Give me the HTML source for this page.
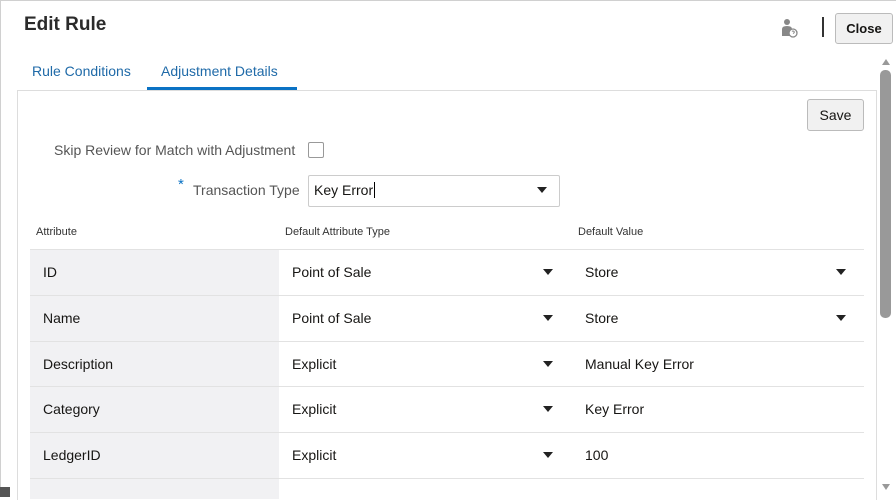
<!DOCTYPE html>
<html><head><style>
*{margin:0;padding:0;box-sizing:border-box}
body{width:896px;height:497px;overflow:hidden;background:#fff;font-family:"Liberation Sans",sans-serif;color:#161513;position:relative}
.abs{position:absolute}
.t{font-size:14px;color:#161513}
</style></head><body>
<div class="abs" style="left:0;top:0;width:896px;height:1px;background:#d0d0d0"></div>
<div class="abs" style="left:0;top:0;width:1px;height:497px;background:#d0d0d0"></div>
<div class="abs" style="left:24px;top:14px;font-size:19px;font-weight:bold;color:#2b2b2b">Edit Rule</div>
<svg class="abs" style="left:781px;top:18px" width="18" height="20" viewBox="0 0 18 20"><circle cx="6" cy="4" r="3" fill="#888"/><path d="M1 18V11q0-3 5-3t5 3v7z" fill="#888"/><circle cx="12" cy="15" r="4" fill="#fff" stroke="#888" stroke-width="1.3"/><path d="M11 13.5q1-1 2 0t-1 2" stroke="#888" fill="none"/></svg>
<div class="abs" style="left:822px;top:17px;width:2px;height:20px;background:#333"></div>
<div class="abs" style="left:835px;top:13px;width:58px;height:31px;background:#f1f1f1;border:1px solid #bbb;border-radius:3px;font-size:13px;font-weight:bold;text-align:center;line-height:29px">Close</div>
<div class="abs" style="left:32px;top:63px;font-size:14px;color:#1f6aa8">Rule Conditions</div>
<div class="abs" style="left:161px;top:63px;font-size:14px;color:#1f6aa8">Adjustment Details</div>
<div class="abs" style="left:147px;top:87px;width:150px;height:3px;background:#0a72c4"></div>
<div class="abs" style="left:17px;top:90px;width:860px;height:410px;border:1px solid #ddd;border-bottom:none"></div>
<div class="abs" style="left:878px;top:58px;width:15px;height:435px;background:#fff"></div>
<div class="abs" style="left:882px;top:59px;width:0;height:0;border-left:4px solid transparent;border-right:4px solid transparent;border-bottom:6px solid #999"></div>
<div class="abs" style="left:880px;top:70px;width:11px;height:248px;background:#999;border-radius:5px"></div>
<div class="abs" style="left:882px;top:484px;width:0;height:0;border-left:4px solid transparent;border-right:4px solid transparent;border-top:6px solid #999"></div>
<div class="abs" style="left:807px;top:99px;width:57px;height:32px;background:#f1f1f1;border:1px solid #bbb;border-radius:3px;font-size:14px;text-align:center;line-height:30px">Save</div>
<div class="abs" style="left:54px;top:142px;font-size:14px;color:#555">Skip Review for Match with Adjustment</div>
<div class="abs" style="left:308px;top:142px;width:16px;height:16px;border:1px solid #999;border-radius:2px"></div>
<div class="abs" style="left:178px;top:176px;font-size:15px;color:#0a72c4">*</div>
<div class="abs" style="left:193px;top:182px;font-size:14px;color:#555">Transaction Type</div>
<div class="abs" style="left:308px;top:175px;width:252px;height:32px;border:1px solid #ccc;border-radius:2px"></div>
<div class="abs t" style="left:314px;top:182px">Key Error<span style="border-left:1px solid #000;margin-left:1px"></span></div>
<div class="abs" style="left:537px;top:187px;border-left:5px solid transparent;border-right:5px solid transparent;border-top:6px solid #222"></div>
<div class="abs" style="left:36px;top:226px;font-size:11px;color:#333">Attribute</div>
<div class="abs" style="left:285px;top:226px;font-size:11px;color:#333">Default Attribute Type</div>
<div class="abs" style="left:578px;top:226px;font-size:11px;color:#333">Default Value</div>
<div class="abs" style="left:30px;top:249px;width:249px;height:250px;background:#f1f1f3"></div>
<div id="rows"></div>
<script>
var r=[["ID","Point of Sale","Store",1],["Name","Point of Sale","Store",1],["Description","Explicit","Manual Key Error",0],["Category","Explicit","Key Error",0],["LedgerID","Explicit","100",0]];
var h='';
for(var i=0;i<6;i++){var yy=249+i*45.8;h+='<div class="abs" style="left:30px;top:'+Math.round(yy)+'px;width:834px;height:1px;background:#e2e2e2"></div>';}
r.forEach(function(a,i){var yy=Math.round(249+i*45.8);
h+='<div class="abs t" style="left:43px;top:'+(yy+15)+'px">'+a[0]+'</div>';
h+='<div class="abs t" style="left:292px;top:'+(yy+15)+'px">'+a[1]+'</div>';
h+='<div class="abs" style="left:543px;top:'+(yy+20)+'px;border-left:5px solid transparent;border-right:5px solid transparent;border-top:6px solid #222"></div>';
h+='<div class="abs t" style="left:585px;top:'+(yy+15)+'px">'+a[2]+'</div>';
if(a[3])h+='<div class="abs" style="left:836px;top:'+(yy+20)+'px;border-left:5px solid transparent;border-right:5px solid transparent;border-top:6px solid #222"></div>';});
document.getElementById('rows').innerHTML=h;
</script>
<div class="abs" style="left:0;top:487px;width:10px;height:10px;background:#555"></div>
</body></html>
